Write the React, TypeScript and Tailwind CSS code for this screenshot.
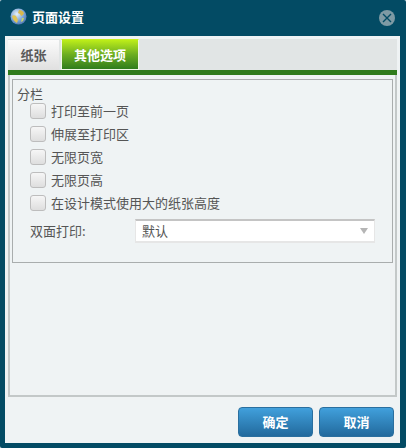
const font = { fontFamily: '"Noto Sans CJK SC", sans-serif' }

const options = ['打印至前一页', '伸展至打印区', '无限页宽', '无限页高', '在设计模式使用大的纸张高度']

// Small globe used as the dialog icon
function GlobeIcon() {
  return (
    <svg width="17" height="17" viewBox="0 0 17 17">
      <defs>
        <radialGradient id="sea" cx="0.4" cy="0.35" r="0.8">
          <stop offset="0" stopColor="#e8f2fa" />
          <stop offset="0.6" stopColor="#6f9bd0" />
          <stop offset="1" stopColor="#3f63a0" />
        </radialGradient>
      </defs>
      <circle cx="8.5" cy="8.5" r="8" fill="url(#sea)" />
      <path d="M9 2c2 0 4 1 5 3l-1 2-2 1-1-2-2-1z" fill="#d9b84a" />
      <path d="M2 8c1-1 3-1 4 0l1 2 1 2-1 3c-2-1-4-3-5-7z" fill="#e0c455" />
      <path d="M12 10l2 0-1 3-2 1z" fill="#c9d46a" />
    </svg>
  )
}

export default function App() {
  return (
    <div className="w-[406px] h-[448px] bg-[#dfe8ee] overflow-hidden" style={font}>
      <div className="w-full h-full rounded-[2px] bg-[#034b64] pl-[5px] pr-[6px] pt-[36px] pb-[5px] relative">
        {/* Title bar */}
        <div className="absolute left-[10px] top-[8px] flex items-center gap-[5px]">
          <GlobeIcon />
          <span className="text-[13px] leading-[17px] font-bold text-white">页面设置</span>
        </div>
        <div className="absolute left-[379px] top-[10px] w-[16px] h-[16px] rounded-full bg-[#7e9aa4] flex items-center justify-center">
          <svg width="10" height="10" viewBox="0 0 10 10">
            <path d="M1 1l8 8M9 1l-8 8" stroke="#034b64" strokeWidth="1.4" />
          </svg>
        </div>

        {/* Body */}
        <div className="h-full bg-[#eff3f4] p-[3px] flex flex-col">
          <div className="h-[31px] bg-[#e1e5e5] flex items-end gap-[2px] shrink-0">
            <div className="w-[51px] h-[30px] bg-gradient-to-b from-[#fbfbfb] to-[#e0e0e0] flex items-center justify-center text-[13px] font-bold text-[#5a5a5a]">
              纸张
            </div>
            <div className="w-[78px] h-[31px] border border-[#f2f8e8] border-t-[#c8f020] bg-gradient-to-b from-[#bdee18] via-[#6cae20] to-[#2f7d1c] flex items-center justify-center text-[13px] font-bold text-white">
              其他选项
            </div>
          </div>
          <div className="h-[5px] bg-[#2f7b1c] shrink-0" />
          <div className="h-[322px] border-x-2 border-b-2 border-[#c3c8c8] px-[2px] pt-[4px] shrink-0">
            <div className="h-[184px] border border-[#a9adad] px-[4px] text-[13px] text-[#555]">
              <div className="h-[19px] leading-[19px] pt-[4px]">分栏</div>
              <div className="pl-[13px] flex flex-col">
                {options.map((label) => (
                  <div key={label} className="h-[23px] flex items-center gap-[5px]">
                    <div className="w-[16px] h-[16px] rounded-[3px] border border-[#bdbdbd] bg-gradient-to-b from-[#f6f6f6] to-[#dedede]" />
                    <span>{label}</span>
                  </div>
                ))}
                <div className="h-[24px] mt-[5px] flex items-center">
                  <span className="w-[105px]">双面打印:</span>
                  <div className="w-[240px] h-[24px] bg-white border-t-2 border-t-[#c4c4c4] border-x border-x-[#e6e6e6] border-b-2 border-b-[#e6e6e6] flex items-center justify-between pl-[6px] pr-[5px]">
                    <span>默认</span>
                    <svg width="10" height="6" viewBox="0 0 10 6">
                      <path d="M1 0h8l-4 6z" fill="#b5b5b5" />
                    </svg>
                  </div>
                </div>
              </div>
            </div>
          </div>
          <div className="flex justify-end gap-[6px] pr-[3px] mt-[10px]">
            {['确定', '取消'].map((label) => (
              <div
                key={label}
                className="w-[75px] h-[30px] rounded-[4px] border border-[#2a6f9f] bg-gradient-to-b from-[#41a0dc] to-[#226a9d] flex items-center justify-center text-[13px] font-bold text-white"
              >
                {label}
              </div>
            ))}
          </div>
        </div>
      </div>
    </div>
  )
}
